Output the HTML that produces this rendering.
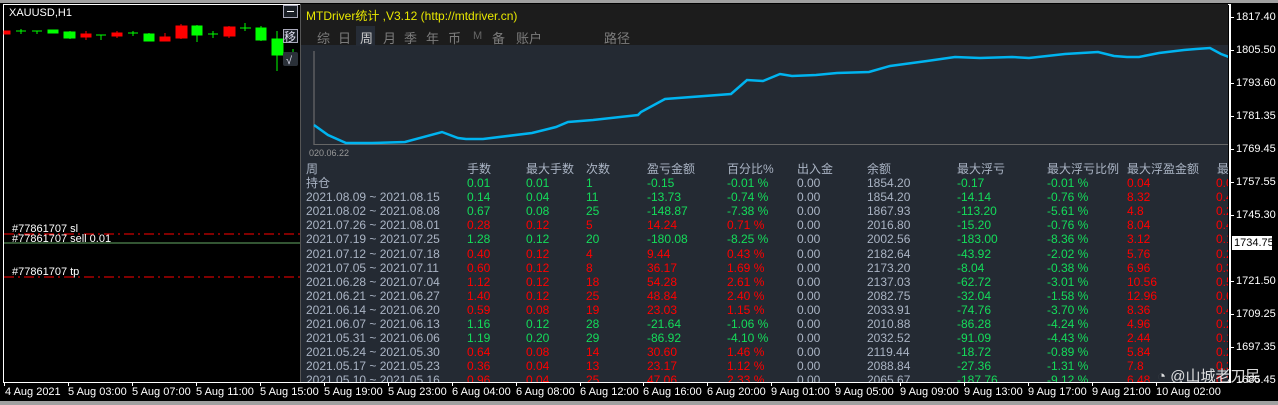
<!DOCTYPE html>
<html><head><meta charset="utf-8"><style>
*{margin:0;padding:0;box-sizing:border-box}
body{width:1278px;height:405px;background:#000;position:relative;overflow:hidden;font-family:"Liberation Sans","Noto Sans CJK SC",sans-serif;}
.a{position:absolute;white-space:nowrap}
.t{font-size:11px;color:#fff}
.c{position:absolute}
#panel{position:absolute;left:300px;top:4px;width:928px;height:378px;background:#242a33;overflow:hidden;border-left:1px solid #555}
#hdr{position:absolute;left:0;top:0;width:928px;height:41px;background:#1c1c1c}
.tab{position:absolute;top:24px;font-size:13px;color:#7c7c7c}
.row{position:absolute;left:0;height:14px;font-size:12px;line-height:14px}
.row span{position:absolute;white-space:nowrap}
.g{color:#14dc5a}.r{color:#f00}.w{color:#aab4c4}
.px{position:absolute;left:1236px;font-size:11px;color:#fff}
.tk{position:absolute;left:1230px;width:4px;height:1px;background:#fff}
.tl{position:absolute;top:386px;font-size:11px;color:#fff}
.tt{position:absolute;top:382px;width:1px;height:4px;background:#fff}
</style></head><body>
<div class="c" style="left:0;top:0;width:1278px;height:3px;background:#a0a0a0"></div>
<div class="c" style="left:3px;top:4px;width:1228px;height:379px;border:1px solid #fff;border-top-color:#fff"></div>
<div class="a t" style="left:9px;top:7px">XAUUSD,H1</div>
<svg class="c" style="left:0;top:0" width="300" height="75">
<g stroke="#f00" fill="#f00"><rect x="4" y="31" width="6" height="3"/>
<line x1="86" y1="31" x2="86" y2="40"/><rect x="81" y="34" width="10" height="3"/>
<rect x="112" y="33" width="10" height="3"/><line x1="117" y1="31" x2="117" y2="38"/>
<line x1="165" y1="33" x2="165" y2="41"/><rect x="160" y="37" width="10" height="4"/>
<line x1="181" y1="24" x2="181" y2="39"/><rect x="176" y="26" width="11" height="12"/>
<line x1="229" y1="26" x2="229" y2="38"/><rect x="224" y="27" width="11" height="9"/></g>
<g stroke="#0f0" fill="#0f0">
<line x1="16" y1="31" x2="26" y2="31"/><line x1="21" y1="29" x2="21" y2="34"/>
<line x1="32" y1="31" x2="42" y2="31"/><line x1="37" y1="31" x2="37" y2="34"/>
<rect x="48" y="30" width="10" height="3"/>
<line x1="70" y1="31" x2="70" y2="39"/><rect x="64" y="32" width="11" height="6"/>
<line x1="96" y1="35" x2="106" y2="35"/><line x1="101" y1="35" x2="101" y2="40"/>
<line x1="128" y1="33" x2="138" y2="33"/><line x1="133" y1="31" x2="133" y2="36"/>
<line x1="149" y1="33" x2="149" y2="41"/><rect x="144" y="34" width="10" height="7"/>
<line x1="197" y1="25" x2="197" y2="42"/><rect x="192" y="26" width="10" height="9"/>
<line x1="208" y1="34" x2="218" y2="34"/><line x1="213" y1="31" x2="213" y2="38"/>
<line x1="240" y1="28" x2="251" y2="28"/><line x1="245" y1="23" x2="245" y2="31"/>
<line x1="261" y1="26" x2="261" y2="41"/><rect x="256" y="28" width="10" height="12"/>
<line x1="277" y1="31" x2="277" y2="71"/><rect x="272" y="39" width="11" height="16"/>
<line x1="293" y1="49" x2="293" y2="56"/></g>
<rect x="283.5" y="5.5" width="14" height="12" fill="#1a1f26" stroke="#aab"/><line x1="287" y1="11.5" x2="294" y2="11.5" stroke="#fff"/>
<rect x="283.5" y="29.5" width="14" height="13" fill="#1a1f26" stroke="#aab"/>
<text x="284" y="41" font-size="12" fill="#dde" font-family="Noto Sans CJK SC">移</text>
<rect x="283" y="52" width="15" height="14" rx="2" fill="#2a3038"/><text x="286" y="64" font-size="11" fill="#dde">√</text>
</svg>
<svg class="c" style="left:4px;top:225px" width="300" height="60">
<line x1="0" y1="9" x2="300" y2="9" stroke="#f00" stroke-dasharray="10,4,2,4"/>
<line x1="0" y1="18" x2="300" y2="18" stroke="#6a6" />
<line x1="0" y1="52" x2="300" y2="52" stroke="#f00" stroke-dasharray="10,4,2,4"/>
</svg>
<div class="a t" style="left:12px;top:223px">#77861707 sl</div>
<div class="a t" style="left:12px;top:233px">#77861707 sell 0.01</div>
<div class="a t" style="left:12px;top:266px">#77861707 tp</div>

<div id="panel">
<div id="hdr">
<div class="a" style="left:5px;top:3px;font-size:12px;color:#e8e800">MTDriver统计 ,V3.12 (http://mtdriver.cn)</div>
<div class="c" style="left:55px;top:22px;width:19px;height:20px;background:#262c36"></div>
<span class="tab" style="left:16px">综</span><span class="tab" style="left:37px">日</span><span class="tab" style="left:59px;color:#ccc">周</span><span class="tab" style="left:82px">月</span><span class="tab" style="left:103px">季</span><span class="tab" style="left:125px">年</span><span class="tab" style="left:147px">币</span><span class="tab" style="left:172px;font-size:11px;top:26px;color:#666">M</span><span class="tab" style="left:191px">备</span><span class="tab" style="left:215px">账户</span><span class="tab" style="left:303px">路径</span>
</div>
<svg class="c" style="left:0;top:41px" width="928" height="120">
<line x1="13" y1="6" x2="13" y2="100" stroke="#777"/>
<line x1="13" y1="99.5" x2="928" y2="99.5" stroke="#666"/>
<polyline fill="none" stroke="#00b4f0" stroke-width="2.5" points="13,80 27,90 45,98 71,98 104,97 141,87 157,93 165,94 182,94 231,88 255,82 267,77 292,75 337,70 340,67 364,54 430,49 446,35 462,36 479,29 491,31 515,30 536,28 568,27 589,21 626,16 654,12 679,13 711,12 728,13 764,9 797,7 813,11 826,12 838,12 858,8 883,5 895,4 909,3 920,9 928,12"/>
<text x="8" y="111" font-size="9" fill="#999" font-family="Liberation Sans">020.06.22</text>
</svg>
<div style="position:absolute;left:0;top:158px;width:928px">
<div class="row w" style="top:0"><span style="left:5px">周</span><span style="left:166px">手数</span><span style="left:225px">最大手数</span><span style="left:285px">次数</span><span style="left:346px">盈亏金额</span><span style="left:426px">百分比%</span><span style="left:496px">出入金</span><span style="left:566px">余额</span><span style="left:656px">最大浮亏</span><span style="left:746px">最大浮亏比例</span><span style="left:826px">最大浮盈金额</span><span style="left:916px">最大</span></div>
</div>
<div id="rows"></div>
</div>
<script>
var d=[["持仓","g","0.01","0.01","1","-0.15","-0.01 %","1854.20","-0.17","-0.01 %","0.04","0.0"],
["2021.08.09 ~ 2021.08.15","g","0.14","0.04","11","-13.73","-0.74 %","1854.20","-14.14","-0.76 %","8.32","0.4"],
["2021.08.02 ~ 2021.08.08","g","0.67","0.08","25","-148.87","-7.38 %","1867.93","-113.20","-5.61 %","4.8","0.2"],
["2021.07.26 ~ 2021.08.01","r","0.28","0.12","5","14.24","0.71 %","2016.80","-15.20","-0.76 %","8.04","0.4"],
["2021.07.19 ~ 2021.07.25","g","1.28","0.12","20","-180.08","-8.25 %","2002.56","-183.00","-8.36 %","3.12","0.1"],
["2021.07.12 ~ 2021.07.18","r","0.40","0.12","4","9.44","0.43 %","2182.64","-43.92","-2.02 %","5.76","0.2"],
["2021.07.05 ~ 2021.07.11","r","0.60","0.12","8","36.17","1.69 %","2173.20","-8.04","-0.38 %","6.96","0.3"],
["2021.06.28 ~ 2021.07.04","r","1.12","0.12","18","54.28","2.61 %","2137.03","-62.72","-3.01 %","10.56","0.5"],
["2021.06.21 ~ 2021.06.27","r","1.40","0.12","25","48.84","2.40 %","2082.75","-32.04","-1.58 %","12.96","0.6"],
["2021.06.14 ~ 2021.06.20","r","0.59","0.08","19","23.03","1.15 %","2033.91","-74.76","-3.70 %","8.36","0.4"],
["2021.06.07 ~ 2021.06.13","g","1.16","0.12","28","-21.64","-1.06 %","2010.88","-86.28","-4.24 %","4.96","0.2"],
["2021.05.31 ~ 2021.06.06","g","1.19","0.20","29","-86.92","-4.10 %","2032.52","-91.09","-4.43 %","2.44","0.1"],
["2021.05.24 ~ 2021.05.30","r","0.64","0.08","14","30.60","1.46 %","2119.44","-18.72","-0.89 %","5.84","0.2"],
["2021.05.17 ~ 2021.05.23","r","0.36","0.04","13","23.17","1.12 %","2088.84","-27.36","-1.31 %","7.8","0.3"],
["2021.05.10 ~ 2021.05.16","r","0.96","0.04","25","47.06","2.33 %","2065.67","-187.76","-9.12 %","6.48","0.3"]];
var h="";
d.forEach(function(r,i){var c=r[1];var top=172+i*14.1;
h+='<div class="row" style="top:'+top+'px;width:928px"><span class="w" style="left:5px">'+r[0]+'</span><span class="'+c+'" style="left:166px">'+r[2]+'</span><span class="'+c+'" style="left:225px">'+r[3]+'</span><span class="'+c+'" style="left:285px">'+r[4]+'</span><span class="'+c+'" style="left:346px">'+r[5]+'</span><span class="'+c+'" style="left:426px">'+r[6]+'</span><span class="w" style="left:496px">0.00</span><span class="w" style="left:566px">'+r[7]+'</span><span class="g" style="left:656px">'+r[8]+'</span><span class="g" style="left:746px">'+r[9]+'</span><span class="r" style="left:826px">'+r[10]+'</span><span class="r" style="left:915px">'+r[11]+'</span></div>';});
document.getElementById('rows').outerHTML=h;
</script>
<div class="c" style="left:1229px;top:4px;width:1px;height:379px;background:#fff"></div>
<div class="c" style="left:3px;top:382px;width:1227px;height:1px;background:#fff"></div>
<div class="px" style="top:11px">1817.40</div><div class="tk" style="top:17px"></div>
<div class="px" style="top:44px">1805.50</div><div class="tk" style="top:50px"></div>
<div class="px" style="top:77px">1793.60</div><div class="tk" style="top:83px"></div>
<div class="px" style="top:110px">1781.35</div><div class="tk" style="top:116px"></div>
<div class="px" style="top:143px">1769.45</div><div class="tk" style="top:149px"></div>
<div class="px" style="top:176px">1757.55</div><div class="tk" style="top:182px"></div>
<div class="px" style="top:209px">1745.30</div><div class="tk" style="top:215px"></div>
<div class="a" style="left:1232px;top:236px;width:40px;height:14px;background:#fff;color:#000;font-size:11px;padding-left:2px;line-height:14px">1734.75</div>
<div class="px" style="top:275px">1721.50</div><div class="tk" style="top:281px"></div>
<div class="px" style="top:308px">1709.25</div><div class="tk" style="top:314px"></div>
<div class="px" style="top:341px">1697.35</div><div class="tk" style="top:347px"></div>
<div class="px" style="top:374px">1685.45</div>
<div class="tl" style="left:5px">4 Aug 2021</div>
<div class="tl" style="left:68px">5 Aug 03:00</div><div class="tl" style="left:132px">5 Aug 07:00</div><div class="tl" style="left:196px">5 Aug 11:00</div><div class="tl" style="left:260px">5 Aug 15:00</div>
<div class="tl" style="left:324px">5 Aug 19:00</div><div class="tl" style="left:388px">5 Aug 23:00</div><div class="tl" style="left:452px">6 Aug 04:00</div><div class="tl" style="left:516px">6 Aug 08:00</div><div class="tl" style="left:580px">6 Aug 12:00</div><div class="tl" style="left:643px">6 Aug 16:00</div><div class="tl" style="left:707px">6 Aug 20:00</div><div class="tl" style="left:771px">9 Aug 01:00</div><div class="tl" style="left:835px">9 Aug 05:00</div><div class="tl" style="left:900px">9 Aug 09:00</div><div class="tl" style="left:964px">9 Aug 13:00</div><div class="tl" style="left:1028px">9 Aug 17:00</div><div class="tl" style="left:1092px">9 Aug 21:00</div><div class="tl" style="left:1156px">10 Aug 02:00</div>
<div class="tt" style="left:4px"></div><div class="tt" style="left:68px"></div><div class="tt" style="left:132px"></div><div class="tt" style="left:196px"></div><div class="tt" style="left:260px"></div><div class="tt" style="left:324px"></div><div class="tt" style="left:388px"></div><div class="tt" style="left:452px"></div><div class="tt" style="left:516px"></div><div class="tt" style="left:580px"></div><div class="tt" style="left:643px"></div><div class="tt" style="left:707px"></div><div class="tt" style="left:771px"></div><div class="tt" style="left:835px"></div><div class="tt" style="left:900px"></div><div class="tt" style="left:964px"></div><div class="tt" style="left:1028px"></div><div class="tt" style="left:1092px"></div><div class="tt" style="left:1156px"></div>
<div class="c" style="left:0;top:401px;width:1278px;height:4px;background:#a0a0a0"></div>
<div class="a" style="left:1157px;top:365px;font-size:15px;color:rgba(255,255,255,0.85)">◔ @山城老刀民</div>
</body></html>
